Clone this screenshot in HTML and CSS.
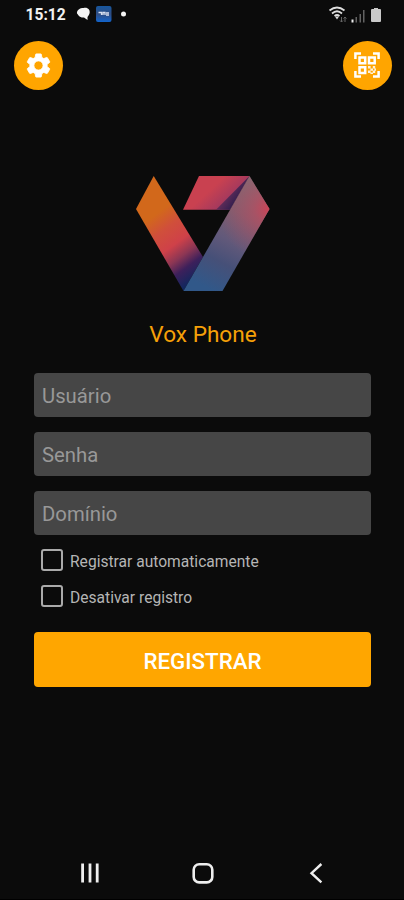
FILE: index.html
```html
<!DOCTYPE html>
<html lang="pt-BR">
<head>
<meta charset="utf-8">
<title>Vox Phone</title>
<link rel="stylesheet" href="styles.css">
</head>
<body>
<div class="screen">
  <header class="status">
    <span class="clock">15:12</span>
    <svg class="notices" width="52" height="20" viewBox="0 0 52 20">
      <path d="M7.500 3C12 2 14 5 13.700 7.500C13.500 10 12 11 11.500 12V15L8 12.500C3.500 13 2.500 10 1 8.500C.5 5 4 3 7.500 3Z" fill="#f4f4f4"/>
      <defs><linearGradient id="app" x2="0" y2="1"><stop stop-color="#17579e"/><stop offset=".5" stop-color="#304d82"/><stop offset="1" stop-color="#1264cc"/></linearGradient></defs>
      <rect x="20" y="1" width="15.500" height="16" rx="2" fill="url(#app)"/>
      <path d="M22.500 7.500h3v2.500M27 10V7.500h2V10M30 8h3M30 10h3" fill="none" stroke="#d7e0f0" stroke-width="1.300"/>
      <circle cx="47.500" cy="9" r="2.500" fill="#f4f4f4"/>
    </svg>
    <svg class="signals" width="54" height="20" viewBox="0 0 54 20">
      <g fill="none" stroke="#dedede" stroke-width="1.700"><path d="M1.500 5.500Q9-.5 16.500 5.500M4 8.500Q9 4 14 8.500M6.500 11Q9 9 11.500 11"/></g>
      <path d="M7 11.500h4l-2 3z" fill="#dedede"/>
      <path d="M13.500 12v5m-1.500-1.500l1.500 1.500l1.500-1.500M17 17v-5m-1.500 1.500L17 12l1.500 1.500" fill="none" stroke="#666"/>
      <path d="M23.500 14.500h2V17.500h-2z" fill="#eee"/>
      <path d="M27.500 12H29v5.500h-1.500zM31.500 9H33v8.500h-1.500zM35 5h1.500v12.500H35z" fill="#626262"/>
      <path d="M44 4h2V3h4v1h2q1 0 1 1v11q0 1-1 1h-8q-1 0-1-1V5q0-1 1-1z" fill="#c9c9c9"/>
    </svg>
  </header>
  <nav class="tools">
    <button class="round" aria-label="Configurações">
      <svg width="29" height="29" viewBox="0 0 24 24"><path fill="#fff" stroke="#fff" stroke-width=".7" stroke-linejoin="round" d="M19.140 12.940c.04-.3.06-.61.06-.94 0-.32-.02-.64-.07-.94l2.030-1.580c.18-.14.23-.41.12-.61l-1.920-3.320c-.12-.22-.37-.29-.59-.22l-2.390.96c-.5-.38-1.030-.7-1.620-.94l-.36-2.540c-.04-.24-.24-.41-.48-.41h-3.840c-.24 0-.43.17-.47.41l-.36 2.540c-.59.24-1.130.57-1.620.94l-2.390-.96c-.22-.08-.47 0-.59.22L2.740 8.870c-.12.21-.08.47.12.61l2.030 1.580c-.05.3-.09.63-.09.94s.02.64.07.94l-2.030 1.580c-.18.14-.23.41-.12.61l1.920 3.320c.12.22.37.29.59.22l2.390-.96c.5.38 1.030.7 1.620.94l.36 2.540c.05.24.24.41.48.41h3.840c.24 0 .44-.17.47-.41l.36-2.540c.59-.24 1.130-.56 1.620-.94l2.390.96c.22.08.47 0 .59-.22l1.920-3.320c.12-.22.07-.47-.12-.61l-2.010-1.580zM12 15.800c-2.100 0-3.800-1.700-3.800-3.800s1.700-3.800 3.800-3.800 3.800 1.700 3.800 3.800-1.700 3.800-3.800 3.800z"/></svg>
    </button>
    <button class="round" aria-label="Ler código QR">
      <svg class="qr" width="26" height="26" viewBox="0 0 26 26"><g fill="none" stroke="#fff" stroke-width="2.500"><path d="M1.400 7V1.400H7M19 1.400h5.600V7M1.400 19v5.600H7M19 24.600h5.600V19"/><path d="M5.500 5.500h5.700v5.700H5.500zM15 5.500h5.700v5.700H15zM5.500 15.200h5.700v5.700H5.500z"/></g><path fill="#fff" opacity=".85" d="M14 14h2.600v2.600H14zM18.800 14h2.400v2.600h-2.400zM16.400 16.400h2.600v2.400h-2.600zM20.400 16.400H22v2.400h-1.600zM14 18.600h2.600V21H14zM18.800 18.600h2.400V21h-2.400zM16.400 20.600h2.600V22h-2.600z"/></svg>
    </button>
  </nav>
  <main class="login">
    <svg class="logo" width="134" height="116" viewBox="0 0 134 116">
      <defs>
        <linearGradient id="left" gradientUnits="userSpaceOnUse" x1="12" y1="26" x2="66" y2="99"><stop offset=".16" stop-color="#d2681b"/><stop offset=".35" stop-color="#d04f3b"/><stop offset=".55" stop-color="#cf4149"/><stop offset=".7" stop-color="#8c3654"/><stop offset=".83" stop-color="#3d205b"/><stop offset="1" stop-color="#10275f"/></linearGradient>
        <linearGradient id="top" gradientUnits="userSpaceOnUse" x1="70" y1="4" x2="98" y2="34"><stop offset=".25" stop-color="#c94150"/><stop offset=".65" stop-color="#a83a5c"/><stop offset="1" stop-color="#75305a"/></linearGradient>
        <linearGradient id="fold" gradientUnits="userSpaceOnUse" x1="89" y1="15" x2="101" y2="24"><stop stop-color="#70305c"/><stop offset="1" stop-color="#35204f"/></linearGradient>
        <linearGradient id="right" gradientUnits="userSpaceOnUse" x1="118" y1="5" x2="64" y2="108"><stop stop-color="#7d7075"/><stop offset=".3" stop-color="#7d6070"/><stop offset=".55" stop-color="#62597a"/><stop offset=".75" stop-color="#465078"/><stop offset="1" stop-color="#315889"/></linearGradient>
        <radialGradient id="glow" gradientUnits="userSpaceOnUse" cx="134" cy="33" r="52"><stop stop-color="#cf4256"/><stop offset=".3" stop-color="#b84c60" stop-opacity=".7"/><stop offset="1" stop-color="#a05068" stop-opacity="0"/></radialGradient>
      </defs>
      <path d="M17.700 0L0 33L47.500 115L67 81Z" fill="url(#left)"/>
      <path d="M63 0H113.500L94 33.700H47Z" fill="url(#top)"/>
      <path d="M113.500 0L80 33.700H94Z" fill="url(#fold)"/>
      <path d="M113.500 0L133.500 33L86.500 115H47.500Z" fill="url(#right)"/>
      <path d="M113.500 0L133.500 33L86.500 115H47.500Z" fill="url(#glow)"/>
    </svg>
    <h1 class="title">Vox Phone</h1>
    <form class="form">
      <input class="field" type="text" placeholder="Usuário">
      <input class="field" type="password" placeholder="Senha">
      <input class="field" type="text" placeholder="Domínio">
      <div class="options">
        <label class="option"><input class="check" type="checkbox"><span class="caption">Registrar automaticamente</span></label>
        <label class="option"><input class="check" type="checkbox"><span class="caption">Desativar registro</span></label>
      </div>
      <button class="submit" type="button">REGISTRAR</button>
    </form>
  </main>
  <footer class="system">
    <svg width="20" height="22" viewBox="0 0 20 22"><path d="M2.600 1.500v19M10 1.500v19M17.200 1.500v19" stroke="#eee" stroke-width="2.800"/></svg>
    <svg class="home" width="22" height="22" viewBox="0 0 22 22"><rect x="1.700" y="2.200" width="18.600" height="18.200" rx="5.500" fill="none" stroke="#eee" stroke-width="2.600"/></svg>
    <svg width="14" height="22" viewBox="0 0 14 22"><path d="M12.400 2L2.500 11.200L12.400 20.400" fill="none" stroke="#eee" stroke-width="2.400"/></svg>
  </footer>
</div>
</body>
</html>
```
FILE: styles.css
```css
* { box-sizing: border-box; }
body { margin: 0; background: #0b0b0b; font-family: Roboto, sans-serif; }
.screen { width: 404px; height: 900px; display: flex; flex-direction: column; background: #0b0b0b; border-bottom: 1px solid #000; overflow: hidden; }
.status { height: 40.5px; padding: 5px 22px 0 25.5px; display: flex; align-items: flex-start; }
.clock { width: 50.5px; font-size: 15.6px; line-height: 20px; font-weight: 700; color: #f2f2f2; }
.signals { margin-left: auto; }
.tools { height: 49px; padding: 0 12.5px 0 13.5px; display: flex; justify-content: space-between; }
.round { width: 49px; height: 49px; padding: 0; border: 0; border-radius: 50%; background: #ffa500; display: flex; align-items: center; justify-content: center; }
.qr { margin-right: 1px; }
.login { margin: 86.5px 33px 0 34px; display: flex; flex-direction: column; }
.logo { margin-left: 102px; }
.title { margin: 28px 0 0; height: 28px; padding-left: 1px; font-size: 22.6px; line-height: 29px; font-weight: 400; text-align: center; color: #f6a008; }
.form { margin-top: 25px; display: flex; flex-direction: column; gap: 15px; }
.field { width: 100%; height: 44px; padding: 2px 8px 0; border: 0; border-radius: 4px; background: #464646; color: #ddd; font: 400 20.3px/24px Roboto, sans-serif; }
.field::placeholder { color: #989898; opacity: 1; }
.options { margin-top: -1px; display: flex; flex-direction: column; gap: 14px; }
.option { height: 22px; padding-left: 7px; display: flex; align-items: center; gap: 7px; font-size: 15.6px; line-height: 22px; color: #b5b5b5; }
.check { appearance: none; width: 22px; height: 22px; margin: 0; border: 2.500px solid #aaa; border-radius: 3px; }
.caption { padding-top: 3px; }
.submit { height: 55px; margin-top: 10px; padding: 2px 0 0; border: 0; border-radius: 4px; background: #ffa600; color: #fff; font: 500 22.3px/28px Roboto, sans-serif; }
.system { margin-top: auto; height: 37px; padding: 0 81px 0 80px; display: flex; align-items: flex-start; justify-content: space-between; }
.home { margin-right: 4px; }
```
